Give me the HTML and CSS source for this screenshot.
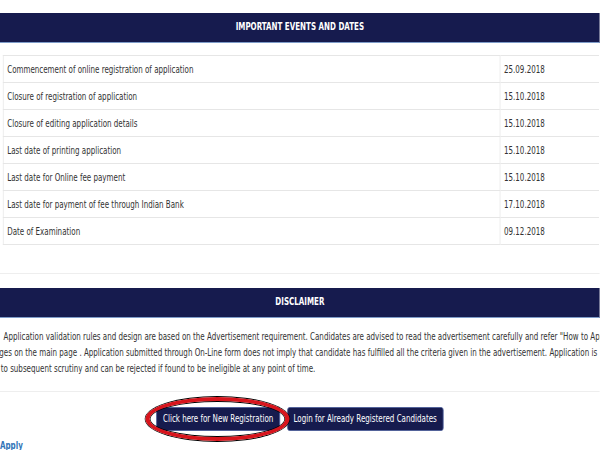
FILE: index.html
```html
<!DOCTYPE html>
<html>
	<head>
		<meta charset="UTF-8">
		<title>Important Events and Dates</title>
		<link rel="stylesheet" href="styles.css">
	</head>
	<body>
		<div class="page">
			<div class="bar">IMPORTANT EVENTS AND DATES</div>
			<table class="dates">
				<tr><td class="ev">Commencement of online registration of application</td><td>25.09.2018</td></tr>
				<tr><td class="ev">Closure of registration of application</td><td>15.10.2018</td></tr>
				<tr><td class="ev">Closure of editing application details</td><td>15.10.2018</td></tr>
				<tr><td class="ev">Last date of printing application</td><td>15.10.2018</td></tr>
				<tr><td class="ev">Last date for Online fee payment</td><td>15.10.2018</td></tr>
				<tr><td class="ev">Last date for payment of fee through Indian Bank</td><td>17.10.2018</td></tr>
				<tr><td class="ev">Date of Examination</td><td>09.12.2018</td></tr>
			</table>
			<div class="rule"></div>
			<div class="bar">DISCLAIMER</div>
			<div class="note">
				<div class="line first">Application validation rules and design are based on the Advertisement requirement. Candidates are advised to read the advertisement carefully and refer "How to Apply"</div>
				<div class="line second">ges on the main page . Application submitted through On-Line form does not imply that candidate has fulfilled all the criteria given in the advertisement. Application is</div>
				<div class="line third">to subsequent scrutiny and can be rejected if found to be ineligible at any point of time.</div>
			</div>
			<div class="rule low"></div>
			<div class="actions">
				<div class="mark">
					<a href="#" class="btn">Click here for New Registration</a>
					<span class="ring"></span>
				</div>
				<a href="#" class="btn">Login for Already Registered Candidates</a>
			</div>
			<a href="#" class="apply">Apply</a>
		</div>
	</body>
</html>
```

FILE: styles.css
```css
* {
	margin:0;
	padding:0;
	box-sizing:border-box;
}
html, body {
	overflow:hidden;
}
body {
	background:#fff;
	font-family:"DejaVu Sans Condensed", "DejaVu Sans", sans-serif;
	font-size:11px;
	color:#333;
}
/* the capture is squeezed sideways, so the page is laid out wide and narrowed */
.page {
	width:833px;
	height:450px;
	padding-top:13px;
	overflow:hidden;
	transform:scaleX(0.72);
	transform-origin:0 0;
}
.bar {
	height:30px;
	line-height:28px;
	background:#161b4e;
	border-bottom:1px solid #7e9cc9;
	color:#fff;
	font-weight:bold;
	text-align:center;
	font-size:11px;
}
.dates {
	margin:12px 0 0 4px;
	width:828px;
	border-collapse:collapse;
}
	.dates td {
		height:27px;
		padding:0 5px;
		border:1px solid #e6e6e6;
		border-right:none;
		vertical-align:middle;
	}
	.dates .ev {
		width:690px;
	}
.rule {
	height:1px;
	margin:28px 0 14px;
	background:#eee;
}
.note {
	padding-top:11px;
	line-height:16px;
	white-space:nowrap;
	overflow:hidden;
}
	.note .first {
		padding-left:5px;
	}
	.note .second {
		margin-left:-1px;
	}
	.note .third {
		padding-left:1px;
	}
.rule.low {
	margin:14px 0 14px;
}
.actions {
	display:flex;
	justify-content:center;
	gap:10px;
	padding-top:1px;
}
.mark {
	position:relative;
}
.btn {
	display:block;
	height:24px;
	line-height:22px;
	padding:0 8px;
	background:#161b4e;
	border:1px solid #4a5c98;
	border-radius:3px;
	color:#fff;
	text-decoration:none;
}
.ring {
	position:absolute;
	left:-15px;
	top:-10px;
	width:200px;
	height:44px;
	border:4px solid #d8141c;
	border-left-width:6px;
	border-right-width:6px;
	border-radius:50%;
	box-shadow:0 0 0 1px #000, inset 0 0 0 1px #000;
}
.apply {
	display:block;
	margin-top:8px;
	color:#3274b8;
	font-weight:bold;
	text-decoration:none;
}
```
